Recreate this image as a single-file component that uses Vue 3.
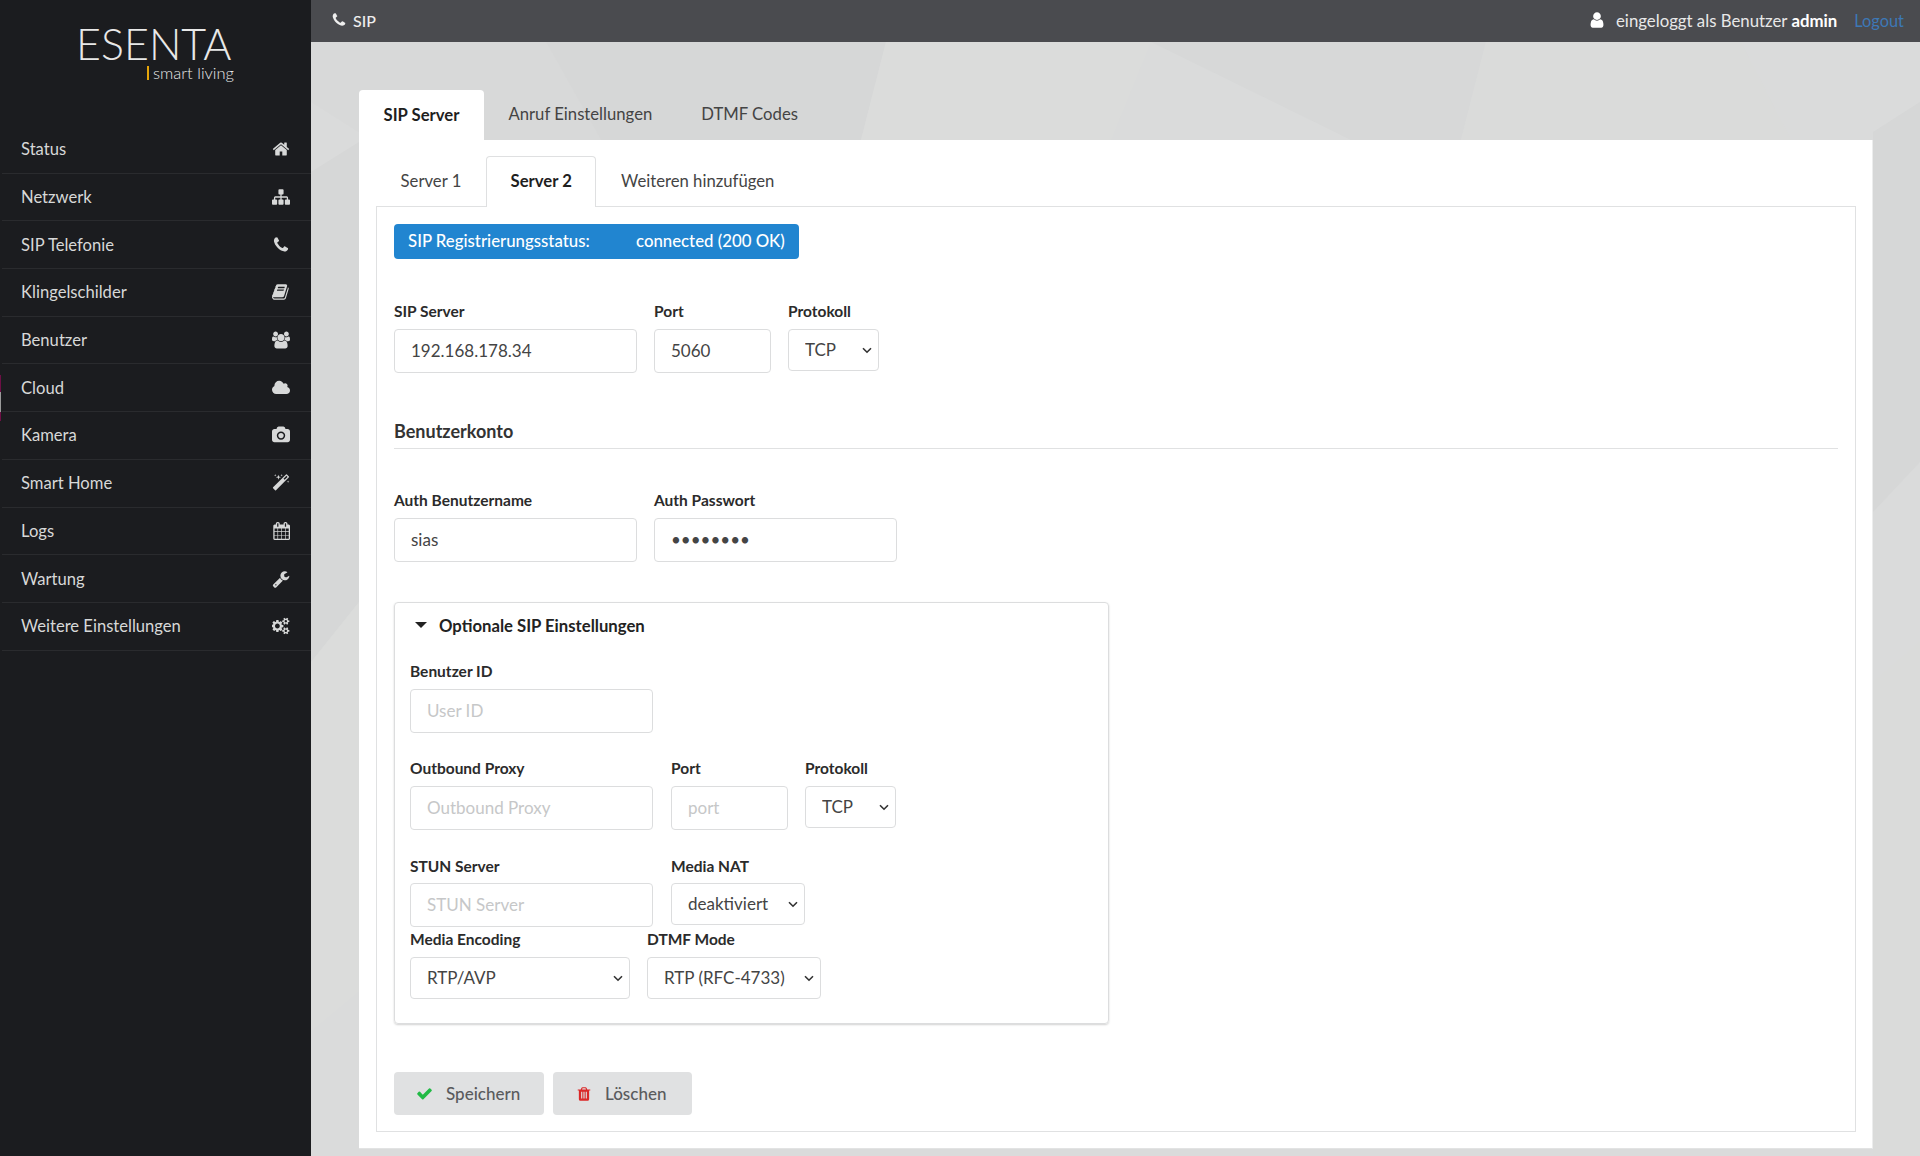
<template>
  <div class="layout">
    <aside class="sidebar">
      <span class="edge-mark"></span>
      <div class="logo">
        <div class="logo-name">ESENTA</div>
        <div class="logo-sub"><span class="logo-bar"></span>smart living</div>
      </div>
      <nav class="menu">
        <a v-for="item in menu" :key="item.label" class="menu-item">
          <span>{{ item.label }}</span>
          <span class="menu-icon">
            <svg :viewBox="item.box" class="icon" fill="currentColor"><path :d="item.path" /></svg>
          </span>
        </a>
      </nav>
    </aside>

    <div class="main">
      <svg class="backdrop" viewBox="0 0 1609 1114" preserveAspectRatio="none">
        <polygon points="0,0 235,0 290,98 60,98 0,60" fill="#d8d9d9" />
        <polygon points="235,0 575,0 550,98 290,98" fill="#d6d7d7" />
        <polygon points="575,0 840,0 800,98 550,98" fill="#dbdcdb" />
        <polygon points="840,0 1175,0 1150,98 1040,98" fill="#d7d8d8" />
        <polygon points="1175,0 1430,0 1480,98 1150,98" fill="#dadbda" />
        <polygon points="1562,90 1609,60 1609,420 1562,470" fill="#d6d7d7" />
        <polygon points="1562,640 1609,600 1609,1114 1562,1114" fill="#dadbda" />
        <polygon points="0,130 48,100 48,560 0,620" fill="#d6d7d7" />
        <polygon points="0,620 48,560 48,950 0,990" fill="#dbdcdb" />
      </svg>

      <header class="topbar">
        <div class="page-title">
          <svg viewBox="0 0 1792 1792" class="title-icon" fill="currentColor"><path :d="icons.phone" /></svg>
          SIP
        </div>
        <div class="user-info">
          <svg viewBox="0 0 1792 1792" class="user-icon" fill="currentColor"><path :d="icons.user" /></svg>
          <span class="user-text">eingeloggt als Benutzer <b>admin</b></span>
          <a class="logout">Logout</a>
        </div>
      </header>

      <div class="content">
        <div class="outer-tabs">
          <a class="outer-tab active">SIP Server</a>
          <a class="outer-tab">Anruf Einstellungen</a>
          <a class="outer-tab">DTMF Codes</a>
        </div>

        <div class="card">
          <div class="inner-tabs">
            <a class="inner-tab">Server 1</a>
            <a class="inner-tab active">Server 2</a>
            <a class="inner-tab">Weiteren hinzufügen</a>
          </div>

          <div class="pane">
            <div class="status">
              <span class="status-label">SIP Registrierungsstatus:</span>
              <span>connected (200 OK)</span>
            </div>

            <div class="row server-row">
              <div class="field">
                <label>SIP Server</label>
                <input class="w-main" type="text" value="192.168.178.34" />
              </div>
              <div class="field">
                <label>Port</label>
                <input class="w-port" type="text" value="5060" />
              </div>
              <div class="field">
                <label>Protokoll</label>
                <select class="w-proto"><option>TCP</option></select>
              </div>
            </div>

            <h4 class="section-title">Benutzerkonto</h4>

            <div class="row auth-row">
              <div class="field">
                <label>Auth Benutzername</label>
                <input class="w-main" type="text" value="sias" />
              </div>
              <div class="field">
                <label>Auth Passwort</label>
                <input class="w-pass" type="password" value="password" />
              </div>
            </div>

            <details class="optional" open>
              <summary>Optionale SIP Einstellungen</summary>
              <div class="row first">
                <div class="field">
                  <label>Benutzer ID</label>
                  <input class="w-main" type="text" placeholder="User ID" />
                </div>
              </div>
              <div class="row proxy-row">
                <div class="field">
                  <label>Outbound Proxy</label>
                  <input class="w-main" type="text" placeholder="Outbound Proxy" />
                </div>
                <div class="field">
                  <label>Port</label>
                  <input class="w-port" type="text" placeholder="port" />
                </div>
                <div class="field">
                  <label>Protokoll</label>
                  <select class="w-proto"><option>TCP</option></select>
                </div>
              </div>
              <div class="row stun-row">
                <div class="field">
                  <label>STUN Server</label>
                  <input class="w-main" type="text" placeholder="STUN Server" />
                </div>
                <div class="field">
                  <label>Media NAT</label>
                  <select class="w-nat"><option>deaktiviert</option></select>
                </div>
              </div>
              <div class="row media-row">
                <div class="field">
                  <label>Media Encoding</label>
                  <select class="w-enc"><option>RTP/AVP</option></select>
                </div>
                <div class="field">
                  <label>DTMF Mode</label>
                  <select class="w-dtmf"><option>RTP (RFC-4733)</option></select>
                </div>
              </div>
            </details>

            <div class="actions">
              <button class="btn save">
                <svg viewBox="0 0 1792 1792" class="btn-icon green" fill="currentColor"><path :d="icons.check" /></svg>
                Speichern
              </button>
              <button class="btn remove">
                <svg viewBox="0 0 1408 1792" class="btn-icon red" fill="currentColor"><path :d="icons.trash" /></svg>
                Löschen
              </button>
            </div>
          </div>
        </div>
      </div>
    </div>
  </div>
</template>

<script setup>
const icons = {
  phone: 'M1600 1240q0 27-10 70.5t-21 68.5q-21 50-122 106-94 51-186 51-27 0-53-3.5t-57.5-12.5-47-14.5-55.5-20.5-49-18q-98-35-175-83-127-79-264-216t-216-264q-48-77-83-175-3-9-18-49t-20.5-55.5-14.5-47-12.5-57.5-3.5-53q0-92 51-186 56-101 106-122 25-11 68.5-21t70.5-10q14 0 21 3 18 6 53 76 11 19 30 54t35 63.5 31 53.5q3 4 17.5 25t21.5 35.5 7 28.5q0 20-28.5 50t-62 55-62 53-28.5 46q0 9 5 22.5t8.5 20.5 14 24 11.5 19q76 137 174 235t235 174q2 1 19 11.5t24 14 20.5 8.5 22.5 5q18 0 46-28.5t53-62 55-62 50-28.5q14 0 28.5 7t35.5 21.5 25 17.5q25 15 53.5 31t63.5 35 54 30q70 35 76 53 3 7 3 21z',
  user: 'M1536 1399q0 109-62.5 187t-150.5 78h-854q-88 0-150.5-78t-62.5-187q0-85 8.5-160.5t31.5-152 58.5-131 94-89 134.5-34.5q131 128 313 128t313-128q76 0 134.5 34.5t94 89 58.5 131 31.5 152 8.5 160.5zm-256-887q0 159-112.5 271.5t-271.5 112.5-271.5-112.5-112.5-271.5 112.5-271.5 271.5-112.5 271.5 112.5 112.5 271.5z',
  check: 'M1671 566q0 40-28 68l-724 724-136 136q-28 28-68 28t-68-28l-136-136-362-362q-28-28-28-68t28-68l136-136q28-28 68-28t68 28l294 295 656-657q28-28 68-28t68 28l136 136q28 28 28 68z',
  trash: 'M512 1376v-704q0-14-9-23t-23-9h-64q-14 0-23 9t-9 23v704q0 14 9 23t23 9h64q14 0 23-9t9-23zm256 0v-704q0-14-9-23t-23-9h-64q-14 0-23 9t-9 23v704q0 14 9 23t23 9h64q14 0 23-9t9-23zm256 0v-704q0-14-9-23t-23-9h-64q-14 0-23 9t-9 23v704q0 14 9 23t23 9h64q14 0 23-9t9-23zm-544-992h448l-48-117q-7-9-17-11h-317q-10 2-17 11zm928 32v64q0 14-9 23t-23 9h-96v948q0 83-47 143.5t-113 60.5h-832q-66 0-113-58.5t-47-141.5v-952h-96q-14 0-23-9t-9-23v-64q0-14 9-23t23-9h309l70-167q15-37 54-63t79-26h320q40 0 79 26t54 63l70 167h309q14 0 23 9t9 23z'
}

const menu = [
  { label: 'Status', box: '0 0 1792 1792', path: 'M1472 992v480q0 26-19 45t-45 19h-384v-384h-256v384h-384q-26 0-45-19t-19-45v-480q0-1 .5-3t.5-3l575-474 575 474q1 2 1 6zm223-69l-62 74q-8 9-21 11h-3q-13 0-21-7l-692-577-692 577q-12 8-24 7-13-2-21-11l-62-74q-8-10-7-23.5t11-21.5l719-599q32-26 76-26t76 26l244 204v-195q0-14 9-23t23-9h192q14 0 23 9t9 23v408l219 182q10 8 11 21.5t-7 23.5z' },
  { label: 'Netzwerk', box: '0 0 1792 1792', path: 'M1792 1248v320q0 40-28 68t-68 28h-320q-40 0-68-28t-28-68v-320q0-40 28-68t68-28h96v-192h-512v192h96q40 0 68 28t28 68v320q0 40-28 68t-68 28h-320q-40 0-68-28t-28-68v-320q0-40 28-68t68-28h96v-192h-512v192h96q40 0 68 28t28 68v320q0 40-28 68t-68 28h-320q-40 0-68-28t-28-68v-320q0-40 28-68t68-28h96v-192q0-52 38-90t90-38h512v-192h-96q-40 0-68-28t-28-68v-320q0-40 28-68t68-28h320q40 0 68 28t28 68v320q0 40-28 68t-68 28h-96v192h512q52 0 90 38t38 90v192h96q40 0 68 28t28 68z' },
  { label: 'SIP Telefonie', box: '0 0 1792 1792', path: icons.phone },
  { label: 'Klingelschilder', box: '0 0 1792 1792', path: 'M1639 478q40 57 18 129l-275 906q-19 64-76.5 107.5t-122.5 43.5h-923q-77 0-148.5-53.5t-99.5-131.5q-24-67-2-127 0-4 3-27t4-37q1-8-3-21.5t-3-19.5q2-11 8-21t16.5-23.5 16.5-23.5q23-38 45-91.5t30-91.5q3-10 .5-30t-.5-28q3-11 17-28t17-23q21-36 42-92t25-90q1-9-2.5-32t.5-28q4-13 22-30.5t22-22.5q19-26 42.5-84.5t27.5-96.5q1-8-3-25.5t-2-26.5q2-8 9-18t18-23 17-21q8-12 16.5-30.5t15-35 16-36 19.5-32 26.5-23.5 36-11.5 47.5 5.5l-1 3q38-9 51-9h761q74 0 114 56t18 130l-274 906q-36 119-71.5 153.5t-128.5 34.5h-869q-27 0-38 15-11 16-1 43 24 70 144 70h923q29 0 56-15.5t35-41.5l300-987q7-22 5-57 38 15 59 43zm-1064 2q-4 13 2 22.5t20 9.5h608q13 0 25.5-9.5t16.5-22.5l21-64q4-13-2-22.5t-20-9.5h-608q-13 0-25.5 9.5t-16.5 22.5zm-83 256q-4 13 2 22.5t20 9.5h608q13 0 25.5-9.5t16.5-22.5l21-64q4-13-2-22.5t-20-9.5h-608q-13 0-25.5 9.5t-16.5 22.5z' },
  { label: 'Benutzer', box: '0 0 1920 1792', path: 'M593 896q-162 5-265 128h-134q-82 0-138-40.5t-56-118.5q0-353 124-353 6 0 43.5 21t97.5 42.5 119 21.5q67 0 133-23-5 37-5 66 0 139 81 256zm1071 637q0 120-73 189.5t-194 69.5h-874q-121 0-194-69.5t-73-189.5q0-53 3.5-103.5t14-109 26.5-108.5 43-97.5 62-81 85.5-53.5 111.5-20q10 0 43 21.5t73 48 107 48 135 21.5 135-21.5 107-48 73-48 43-21.5q61 0 111.5 20t85.5 53.5 62 81 43 97.5 26.5 108.5 14 109 3.5 103.5zm-1024-1277q0 106-75 181t-181 75-181-75-75-181 75-181 181-75 181 75 75 181zm704 384q0 159-112.5 271.5t-271.5 112.5-271.5-112.5-112.5-271.5 112.5-271.5 271.5-112.5 271.5 112.5 112.5 271.5zm576 225q0 78-56 118.5t-138 40.5h-134q-103-123-265-128 81-117 81-256 0-29-5-66 66 23 133 23 59 0 119-21.5t97.5-42.5 43.5-21q124 0 124 353zm-128-609q0 106-75 181t-181 75-181-75-75-181 75-181 181-75 181 75 75 181z' },
  { label: 'Cloud', box: '0 0 1920 1792', path: 'M1920 1152q0 159-112.5 271.5t-271.5 112.5h-1088q-185 0-316.5-131.5t-131.5-316.5q0-132 71-241.5t187-163.5q-2-28-2-43 0-212 150-362t362-150q158 0 286.5 88t187.5 230q70-62 166-62 106 0 181 75t75 181q0 75-41 138 129 30 213 134.5t84 239.5z' },
  { label: 'Kamera', box: '0 0 1920 1792', path: 'M960 672q119 0 203.5 84.5t84.5 203.5-84.5 203.5-203.5 84.5-203.5-84.5-84.5-203.5 84.5-203.5 203.5-84.5zm704-416q106 0 181 75t75 181v896q0 106-75 181t-181 75h-1408q-106 0-181-75t-75-181v-896q0-106 75-181t181-75h224l51-136q19-49 69.5-84.5t103.5-35.5h512q53 0 103.5 35.5t69.5 84.5l51 136h224zm-704 1152q185 0 316.5-131.5t131.5-316.5-131.5-316.5-316.5-131.5-316.5 131.5-131.5 316.5 131.5 316.5 316.5 131.5z' },
  { label: 'Smart Home', box: '0 0 1792 1792', path: 'M1254 581l293-293-107-107-293 293zm447-293q0 27-18 45l-1286 1286q-18 18-45 18t-45-18l-198-198q-18-18-18-45t18-45l1286-1286q18-18 45-18t45 18l198 198q18 18 18 45zm-1351-190l98 30-98 30-30 98-30-98-98-30 98-30 30-98zm350 162l196 60-196 60-60 196-60-196-196-60 196-60 60-196zm930 478l98 30-98 30-30 98-30-98-98-30 98-30 30-98zm-640-640l98 30-98 30-30 98-30-98-98-30 98-30 30-98z' },
  { label: 'Logs', box: '0 0 1664 1792', path: 'M192 1664h288v-288h-288v288zm352 0h320v-288h-320v288zm-352-352h288v-320h-288v320zm352 0h320v-320h-320v320zm-352-384h288v-288h-288v288zm736 736h320v-288h-320v288zm-384-736h320v-288h-320v288zm768 736h288v-288h-288v288zm-384-352h320v-320h-320v320zm-352-864v-288q0-13-9.5-22.5t-22.5-9.5h-64q-13 0-22.5 9.5t-9.5 22.5v288q0 13 9.5 22.5t22.5 9.5h64q13 0 22.5-9.5t9.5-22.5zm736 864h288v-320h-288v320zm-384-384h320v-288h-320v288zm384 0h288v-288h-288v288zm32-480v-288q0-13-9.5-22.5t-22.5-9.5h-64q-13 0-22.5 9.5t-9.5 22.5v288q0 13 9.5 22.5t22.5 9.5h64q13 0 22.5-9.5t9.5-22.5zm384-64v1280q0 52-38 90t-90 38h-1408q-52 0-90-38t-38-90v-1280q0-52 38-90t90-38h128v-96q0-66 47-113t113-47h64q66 0 113 47t47 113v96h384v-96q0-66 47-113t113-47h64q66 0 113 47t47 113v96h128q52 0 90 38t38 90z' },
  { label: 'Wartung', box: '0 0 1792 1792', path: 'M448 1472q0-26-19-45t-45-19-45 19-19 45 19 45 45 19 45-19 19-45zm644-420l-682 682q-37 37-90 37-52 0-91-37l-106-108q-38-36-38-90 0-53 38-91l681-681q39 98 114.5 173.5t173.5 114.5zm634-435q0 39-23 106-47 134-164.5 217.5t-258.5 83.5q-185 0-316.5-131.5t-131.5-316.5 131.5-316.5 316.5-131.5q58 0 121.5 16.5t107.5 46.5q16 11 16 28t-16 28l-293 169v224l193 107q5-3 79-48.5t135.5-81 70.5-35.5q15 0 23.5 10t8.5 25z' },
  { label: 'Weitere Einstellungen', box: '0 0 1920 1792', path: 'M832 896q0-106-75-181t-181-75-181 75-75 181 75 181 181 75 181-75 75-181zm768 512q0-52-38-90t-90-38-90 38-38 90q0 53 37.5 90.5t90.5 37.5 90.5-37.5 37.5-90.5zm0-1024q0-52-38-90t-90-38-90 38-38 90q0 53 37.5 90.5t90.5 37.5 90.5-37.5 37.5-90.5zm-384 421v185q0 10-7 19.5t-16 10.5l-155 24q-11 35-32 76 34 48 90 115 7 11 7 20 0 12-7 19-23 30-82.5 89.5t-78.5 59.5q-11 0-21-7l-115-90q-37 19-77 31-11 108-23 155-7 24-30 24h-186q-11 0-20-7.5t-10-17.5l-23-153q-34-10-75-31l-118 89q-7 7-20 7-11 0-21-8-144-133-144-160 0-9 7-19 10-14 41-53t47-61q-23-44-35-82l-152-24q-10-1-17-9.5t-7-19.5v-185q0-10 7-19.5t16-10.5l155-24q11-35 32-76-34-48-90-115-7-11-7-19 0-12 7-20 22-30 82-89t79-59q11 0 21 7l115 90q34-18 77-32 11-108 23-154 7-24 30-24h186q11 0 20 7.5t10 17.5l23 153q34 10 75 31l118-89q8-7 20-7 11 0 21 8 144 133 144 160 0 8-7 19-12 16-42 54t-45 60q23 48 34 82l152 23q10 2 17 10.5t7 19.5zm640 533v140q0 16-149 31-12 27-30 52 51 113 51 138 0 4-4 7-122 71-124 71-8 0-46-47t-52-68q-20 2-30 2t-30-2q-14 21-52 68t-46 47q-2 0-124-71-4-3-4-7 0-25 51-138-18-25-30-52-149-15-149-31v-140q0-16 149-31 13-29 30-52-51-113-51-138 0-4 4-7 4-2 35-20t59-34 30-16q8 0 46 46.5t52 67.5q20-2 30-2t30 2q51-71 92-112l6-2q4 0 124 70 4 3 4 7 0 25-51 138 17 23 30 52 149 15 149 31zm0-1024v140q0 16-149 31-12 27-30 52 51 113 51 138 0 4-4 7-122 71-124 71-8 0-46-47t-52-68q-20 2-30 2t-30-2q-14 21-52 68t-46 47q-2 0-124-71-4-3-4-7 0-25 51-138-18-25-30-52-149-15-149-31v-140q0-16 149-31 13-29 30-52-51-113-51-138 0-4 4-7 4-2 35-20t59-34 30-16q8 0 46 46.5t52 67.5q20-2 30-2t30 2q51-71 92-112l6-2q4 0 124 70 4 3 4 7 0 25-51 138 17 23 30 52 149 15 149 31z' }
]
</script>

<style>
html,
body {
  margin: 0;
  background: #dadbdb;
}
</style>

<style scoped>
.layout {
  display: flex;
  height: 1156px;
  overflow: hidden;
  font-family: Lato, "Liberation Sans", sans-serif;
  color: #333;
}

.sidebar {
  position: relative;
  width: 311px;
  flex-shrink: 0;
  background: #1b1c1f;
  box-sizing: border-box;
  padding-left: 2px;
}

.edge-mark {
  position: absolute;
  left: 0;
  top: 375px;
  width: 1px;
  height: 46px;
  background: linear-gradient(#6d0f45 0 36%, #9a9a9a 36% 80%, #6d0f45 80%);
}

.logo {
  height: 126px;
  box-sizing: border-box;
  padding: 23px 0 0 74px;
  color: #e8e8e8;
}

.logo-name {
  font-size: 43px;
  font-weight: 300;
  line-height: 42px;
}

.logo-sub {
  display: flex;
  align-items: center;
  font-size: 16.5px;
  font-weight: 300;
  line-height: 16px;
  padding-left: 71px;
}

.logo-bar {
  width: 2px;
  height: 14px;
  background: #e5a50a;
  margin-right: 4px;
}

.menu-item {
  display: flex;
  align-items: center;
  justify-content: space-between;
  height: 46.7px;
  padding: 0 21px 0 19px;
  border-bottom: 1px solid #2a2b2e;
  color: #d7d8d8;
  font-size: 16.6px;
}

.menu-icon {
  display: flex;
  justify-content: center;
  width: 18px;
}

.icon {
  width: 18px;
  height: 18px;
}

.main {
  position: relative;
  flex: 1;
  min-width: 0;
}

.backdrop {
  position: absolute;
  left: 0;
  top: 42px;
  width: 100%;
  height: 1114px;
}

.topbar {
  position: relative;
  display: flex;
  align-items: center;
  justify-content: space-between;
  height: 42px;
  padding: 0 16px 2px 20px;
  box-sizing: border-box;
  background: #4a4b4f;
  color: #e8e8e8;
  font-size: 16px;
}

.page-title {
  display: flex;
  align-items: center;
  gap: 6px;
  color: #eee;
  font-weight: 500;
}

.title-icon {
  width: 16px;
  height: 16px;
}

.user-info {
  display: flex;
  align-items: center;
}

.user-text {
  font-size: 16.8px;
}

.user-info b {
  color: #fff;
}

.user-icon {
  width: 18px;
  height: 18px;
  color: #fff;
  margin-right: 10px;
}

.logout {
  margin-left: 17px;
  color: #3d78b6;
  font-size: 16.4px;
}

.content {
  position: relative;
  padding: 48px 47px 0 48px;
}

.outer-tabs {
  display: flex;
  height: 50px;
}

.outer-tab {
  display: flex;
  align-items: center;
  padding: 0 24.5px 3px;
  font-size: 16.7px;
  color: #444;
}

.outer-tab.active {
  padding-bottom: 1px;
  background: #fff;
  border-radius: 4px 4px 0 0;
  font-weight: 700;
  color: #1f1f1f;
}

.card {
  background: #fff;
  padding: 16px 16px 17px 17px;
  height: 1009px;
  box-sizing: border-box;
  border-right: 1px solid #eceded;
  border-bottom: 1px solid #e2e3e3;
}

.inner-tabs {
  display: flex;
  height: 50px;
  position: relative;
}

.inner-tab {
  display: flex;
  align-items: center;
  padding: 0 23.6px 2px;
  font-size: 16.7px;
  color: #444;
  border: 1px solid transparent;
  border-bottom: 0;
}

.inner-tab.active {
  background: #fff;
  height: 51px;
  box-sizing: border-box;
  border-color: #dfe0e1;
  border-radius: 4px 4px 0 0;
  font-weight: 700;
  color: #1f1f1f;
  z-index: 1;
}

.pane {
  height: 926px;
  box-sizing: border-box;
  border: 1px solid #e0e1e2;
  padding: 17px;
}

.status {
  display: inline-flex;
  align-items: center;
  height: 35px;
  width: 405px;
  box-sizing: border-box;
  padding: 0 14px 2px;
  border-radius: 4px;
  background: #2185d0;
  color: #fff;
  font-size: 16.8px;
  font-weight: 500;
  vertical-align: top;
  white-space: nowrap;
}

.status-label {
  width: 228px;
}

.row {
  display: flex;
  gap: 17px;
  align-items: flex-start;
}

.server-row {
  margin-top: 42px;
}

.field {
  display: flex;
  flex-direction: column;
}

label {
  font-size: 15.5px;
  font-weight: 700;
  line-height: 20px;
  margin-bottom: 8px;
  color: #2b2b2b;
}

input,
select {
  box-sizing: border-box;
  border: 1px solid #dcddde;
  border-radius: 4px;
  background-color: #fff;
  font-family: Lato, "Liberation Sans", sans-serif;
  font-size: 17px;
  color: #444;
  outline: none;
}

input {
  height: 44px;
  padding: 0 16px 2px;
}

select {
  appearance: none;
  height: 42px;
  padding: 0 22px 2px 16px;
  background-image: url("data:image/svg+xml,%3Csvg xmlns='http://www.w3.org/2000/svg' width='10' height='7' viewBox='0 0 10 7'%3E%3Cpath d='M1 1.2l4 4 4-4' fill='none' stroke='%23333' stroke-width='1.6'/%3E%3C/svg%3E");
  background-repeat: no-repeat;
  background-position: right 6px center;
}

input::placeholder {
  color: #c6c7c8;
  opacity: 1;
}

.w-main { width: 243px; }
.w-port { width: 117px; }
.w-pass { width: 243px; }
.w-proto { width: 91px; }
.w-nat { width: 134px; }
.w-enc { width: 220px; }
.w-dtmf { width: 174px; }

.section-title {
  margin: 47px 0 0;
  padding-bottom: 6px;
  border-bottom: 1px solid #e0e1e2;
  font-size: 18px;
  font-weight: 700;
  line-height: 22px;
  color: #333;
}

.auth-row {
  margin-top: 41px;
}

.optional {
  margin-top: 40px;
  width: 715px;
  height: 422px;
  box-sizing: border-box;
  border: 1px solid #dcddde;
  border-radius: 4px;
  box-shadow: 0 1px 2px rgba(0, 0, 0, 0.18);
  padding: 0 15px;
}

summary {
  display: flex;
  align-items: center;
  list-style: none;
  height: 45px;
  font-size: 16.7px;
  font-weight: 700;
  color: #222;
}

summary::before {
  content: "";
  width: 0;
  height: 0;
  margin: -2px 12px 0 5px;
  border-left: 6px solid transparent;
  border-right: 6px solid transparent;
  border-top: 6px solid #222;
}

.row.first {
  margin-top: 13px;
}

.proxy-row {
  margin-top: 25px;
  gap: 17px;
}

.proxy-row .field:first-child {
  margin-right: 1px;
}

.stun-row {
  margin-top: 26px;
  gap: 18px;
}

.stun-row label {
  margin-bottom: 7px;
}

.media-row {
  margin-top: 2px;
}

.actions {
  display: flex;
  gap: 9px;
  margin-top: 48px;
}

.btn {
  display: flex;
  align-items: center;
  height: 43px;
  border: 0;
  border-radius: 4px;
  background: #e0e1e2;
  color: #5a5b5d;
  font-family: Lato, "Liberation Sans", sans-serif;
  font-size: 17px;
  font-weight: 500;
  padding: 0;
}

.save {
  width: 150px;
  padding-left: 22px;
  gap: 13px;
}

.remove {
  width: 139px;
  padding-left: 24px;
  gap: 14px;
}

.btn-icon {
  width: 17px;
  height: 17px;
}

.remove .btn-icon {
  width: 14px;
  height: 16px;
}

.green { color: #21ba45; }
.red { color: #db2828; }
</style>
